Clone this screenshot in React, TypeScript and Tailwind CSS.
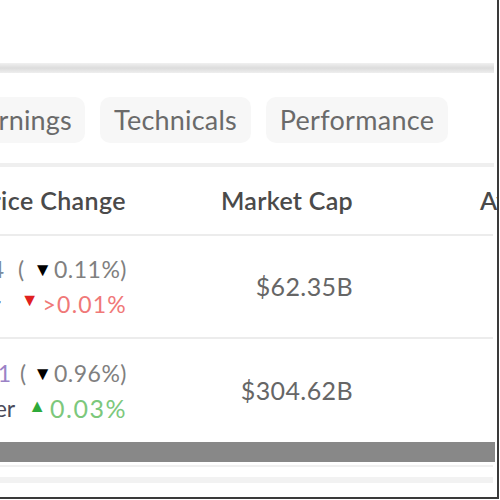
import React from "react";

const font = { fontFamily: "Lato, 'Noto Sans', sans-serif" };

export default function App() {
  return (
    <div className="w-[500px] h-[500px] bg-white overflow-hidden" style={font}>
      <div className="w-[499px] h-[499px] border-r-[2px] border-b-[2px] border-[#3a3a3a] overflow-hidden flex flex-col">
        <div className="h-[63px] shrink-0" />
        <div className="h-[10px] w-[494px] shrink-0 bg-gradient-to-b from-[#f0f0f0] via-[#dcdcdc] to-[#eeeeee]" />
        <div className="h-[90px] shrink-0 pt-[24px] flex gap-[15px] ml-[-60px] overflow-visible">
          <div className="h-[46px] w-[145px] shrink-0 rounded-[10px] bg-[#f7f7f7] flex items-center justify-end pr-[13px] text-[27px] text-[#6a6a6a] tracking-[0.2px]">
            Earnings
          </div>
          <div className="h-[46px] w-[151px] shrink-0 rounded-[10px] bg-[#f7f7f7] flex items-center justify-center text-[27px] text-[#6a6a6a] tracking-[0.2px]">
            Technicals
          </div>
          <div className="h-[46px] w-[182px] shrink-0 rounded-[10px] bg-[#f7f7f7] flex items-center justify-center text-[27px] text-[#6a6a6a] tracking-[0.3px]">
            Performance
          </div>
        </div>
        <div className="h-[4px] w-[494px] shrink-0 bg-[#efefef]" />
        <div className="h-[67px] shrink-0 flex items-center text-[25px] font-semibold text-[#4a4a4a] whitespace-nowrap">
          <div className="w-[126px] min-w-0 shrink-0 flex flex-col items-end">
            <span className="tracking-[0.4px]">Price Change</span>
          </div>
          <div className="w-[227px] min-w-0 shrink-0 text-right tracking-[0.3px]">Market Cap</div>
          <div className="ml-[127px] shrink-0">Avg Volume</div>
        </div>
        <div className="h-[2px] w-[493px] shrink-0 bg-[#ececec]" />
        <div className="h-[101px] shrink-0 flex items-center whitespace-nowrap">
          <div className="w-[127px] min-w-0 shrink-0 flex flex-col items-end gap-[9px] text-[23px] leading-[26px]">
            <span className="text-[#808080] flex items-center">
              <span className="text-[#7a8aa0]">-0.04</span>
              <span className="ml-[14px]">(</span>
              <span className="ml-[9px] mr-[2px] text-[19px] text-black">▼</span>
              <span className="tracking-[0.5px]">0.11%)</span>
            </span>
            <span className="flex items-center">
              <span className="text-[#4a4a5a]">After</span>
              <span className="ml-[20px] text-[18px] text-[#e02020] -translate-y-[5px]">▼</span>
              <span className="ml-[4px] text-[#f07878] tracking-[1.2px]">&gt;0.01%</span>
            </span>
          </div>
          <div className="w-[226px] min-w-0 shrink-0 text-right text-[25px] text-[#666666] tracking-[0.4px]">$62.35B</div>
        </div>
        <div className="h-[2px] w-[493px] shrink-0 bg-[#ececec]" />
        <div className="h-[103px] shrink-0 flex items-center whitespace-nowrap">
          <div className="w-[127px] min-w-0 shrink-0 flex flex-col items-end gap-[9px] text-[23px] leading-[26px]">
            <span className="text-[#808080] flex items-center">
              <span className="text-[#9b82c6]">-2.91</span>
              <span className="ml-[9px]">(</span>
              <span className="ml-[7px] mr-[2px] text-[19px] text-black">▼</span>
              <span className="tracking-[0.5px]">0.96%)</span>
            </span>
            <span className="flex items-center">
              <span className="text-[#4a4a5a]">After</span>
              <span className="ml-[13px] text-[18px] text-[#2eaa3a] -translate-y-[3px]">▲</span>
              <span className="ml-[4px] text-[25px] text-[#7cc87c] tracking-[1.5px]">0.03%</span>
            </span>
          </div>
          <div className="w-[226px] min-w-0 shrink-0 text-right text-[25px] text-[#666666] tracking-[0.4px]">$304.62B</div>
        </div>
        <div className="h-[20px] w-[495px] shrink-0 bg-[#888888]" />
        <div className="h-[3px] shrink-0" />
        <div className="h-[2px] w-[493px] shrink-0 bg-[#f0f0f0]" />
        <div className="h-[10px] shrink-0" />
        <div className="h-[6px] w-[493px] shrink-0 bg-[#f2f2f2]" />
      </div>
    </div>
  );
}
